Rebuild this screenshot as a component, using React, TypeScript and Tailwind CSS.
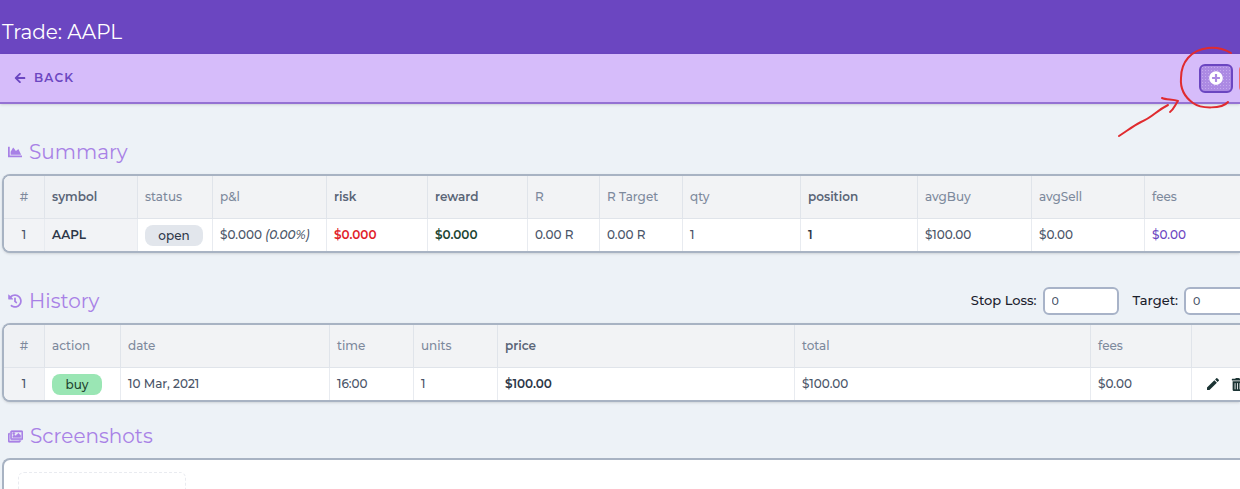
import type { ReactNode } from "react";
import { FaArrowLeft, FaChartArea, FaHistory, FaPlusCircle, FaRegImages, FaTrashAlt } from "react-icons/fa";
import { MdEdit } from "react-icons/md";

type Column = {
  name: string;
  width: string;
  value: ReactNode;
  head?: string;
  cell?: string;
};

const strong = "font-semibold text-[#5a6577]";
const numberHead = "font-medium text-center bg-[#eff1f4]";
const numberCell = "text-center bg-[#f2f3f6]";

const summaryColumns: Column[] = [
  { name: "#", width: "w-[41px]", value: "1", head: numberHead, cell: numberCell },
  {
    name: "symbol",
    width: "w-[93px]",
    value: "AAPL",
    head: "font-semibold text-[#5a6577] bg-[#eff1f4]",
    cell: "font-semibold text-[#2d3748] bg-[#f2f3f6]",
  },
  {
    name: "status",
    width: "w-[75px]",
    value: <span className="block w-[58px] rounded-lg bg-[#e2e6ec] text-center leading-[21px] text-[#2d3748]">open</span>,
  },
  { name: "p&l", width: "w-[114px]", value: <>$0.000 <i>(0.00%)</i></> },
  { name: "risk", width: "w-[101px]", value: "$0.000", head: strong, cell: "font-semibold text-[#e11d2a]" },
  { name: "reward", width: "w-[100px]", value: "$0.000", head: strong, cell: "font-semibold text-[#1c4532]" },
  { name: "R", width: "w-[72px]", value: "0.00 R" },
  { name: "R Target", width: "w-[83px]", value: "0.00 R" },
  { name: "qty", width: "w-[118px]", value: "1" },
  { name: "position", width: "w-[117px]", value: "1", head: strong, cell: "font-semibold text-[#2d3748]" },
  { name: "avgBuy", width: "w-[114px]", value: "$100.00" },
  { name: "avgSell", width: "w-[113px]", value: "$0.00" },
  { name: "fees", width: "w-auto", value: "$0.00", cell: "text-[#6b46c1]" },
];

const historyColumns: Column[] = [
  { name: "#", width: "w-[41px]", value: "1", head: numberHead, cell: numberCell },
  {
    name: "action",
    width: "w-[76px]",
    value: <span className="block w-[50px] rounded-lg bg-[#9ae6b4] text-center leading-[21px] text-[#22432f]">buy</span>,
  },
  { name: "date", width: "w-[209px]", value: "10 Mar, 2021" },
  { name: "time", width: "w-[84px]", value: "16:00" },
  { name: "units", width: "w-[84px]", value: "1" },
  { name: "price", width: "w-[297px]", value: "$100.00", head: strong, cell: "font-semibold text-[#2d3748]" },
  { name: "total", width: "w-[296px]", value: "$100.00" },
  { name: "fees", width: "w-[101px]", value: "$0.00" },
  {
    name: "",
    width: "w-auto",
    value: (
      <span className="flex w-max items-center gap-2.5 pl-1.5 text-[#1c3434]">
        <button type="button" aria-label="Edit"><MdEdit className="size-4" /></button>
        <button type="button" aria-label="Delete"><FaTrashAlt className="size-[13px]" /></button>
      </span>
    ),
  },
];

function DataTable({ label, columns }: { label: string; columns: Column[] }) {
  return (
    <div className="overflow-hidden rounded-l-lg border-2 border-r-0 border-[#a8b3c3] bg-white shadow-sm">
      <table aria-label={label} className="w-full table-fixed border-separate border-spacing-0 text-xs font-medium">
        <thead>
          <tr className="h-[43px] bg-[#f2f3f5] text-[#7d899c]">
            {columns.map((c) => (
              <th
                key={c.name}
                className={`${c.width} ${c.head ?? "font-medium"} border-r border-b border-[#e0e4ea] px-[7px] text-left last:border-r-0 first:text-center`}
              >
                {c.name}
              </th>
            ))}
          </tr>
        </thead>
        <tbody>
          <tr className="h-8 text-[#4a5568]">
            {columns.map((c) => (
              <td key={c.name} className={`${c.cell ?? ""} border-r border-[#e8ebf0] px-[7px] whitespace-nowrap last:border-r-0`}>
                {c.value}
              </td>
            ))}
          </tr>
        </tbody>
      </table>
    </div>
  );
}

function Heading({ icon, children }: { icon: ReactNode; children: ReactNode }) {
  return (
    <h2 className="flex h-8 items-center gap-[7px] pl-1.5 text-xl text-[#a881e6]">
      {icon}
      {children}
    </h2>
  );
}

function NumberField({ id, label }: { id: string; label: string }) {
  return (
    <div className="flex items-center gap-1.5">
      <label htmlFor={id} className="text-[13px] font-medium whitespace-nowrap text-[#1a202c]">{label}</label>
      <input
        id={id}
        type="text"
        inputMode="numeric"
        defaultValue="0"
        className="h-7 w-[76px] rounded-md border-2 border-[#a8b3c8] bg-white px-[7px] text-[11px] font-medium text-[#4a5568]"
      />
    </div>
  );
}

function Annotation() {
  return (
    <svg
      className="pointer-events-none absolute top-[40px] right-0 h-[100px] w-[126px]"
      viewBox="0 0 126 100"
      fill="none"
      stroke="#e02b2f"
      strokeWidth="2"
      strokeLinecap="round"
      strokeLinejoin="round"
      aria-hidden="true"
    >
      <path d="M117 13C110 9 103 7 94 8C77 10 67 22 67 38C66 50 72 58 79 63C87 69 108 69 114 62" />
      <path d="M5 96C13 91 19 86 27 82C39 77 42 71 54 65M48 58C52 60 59 59 64 61C61 65 60 69 56 72" />
    </svg>
  );
}

export default function App() {
  return (
    <div className="relative min-h-screen overflow-hidden bg-[#edf2f7] font-[Montserrat,Inter,sans-serif]">
      <header className="flex h-[54px] items-end bg-[#6b46c1] px-0.5 pb-2">
        <h1 className="text-xl text-white">Trade: AAPL</h1>
      </header>
      <nav className="flex h-[50px] items-center justify-between border-b-2 border-[#9472d3] bg-[#d6bcfa] pl-3.5 shadow-sm">
        <a href="#back" className="flex items-center gap-2 text-xs font-semibold tracking-widest text-[#6b46c1]">
          <FaArrowLeft className="size-3" />
          BACK
        </a>
        <div className="-mr-[33px] flex gap-1.5">
          <button
            type="button"
            aria-label="Add"
            className="flex h-[29px] w-[34px] items-center justify-center rounded-md border-2 border-[#6b46c1] bg-[#ac8ae3] bg-[radial-gradient(#c4a9ef_1px,transparent_1px)] bg-[length:3px_3px] text-white"
          >
            <FaPlusCircle className="size-3.5" />
          </button>
          <button type="button" aria-label="Remove" className="h-[29px] w-[34px] rounded-md border-2 border-[#f26b6b] bg-[#f5a3a3]" />
        </div>
      </nav>
      <main className="h-[385px] min-h-[calc(100vh-104px)] pt-8 pl-0.5">
        <section>
          <Heading icon={<FaChartArea className="size-3.5" />}>Summary</Heading>
          <div className="pt-1.5">
            <DataTable label="Summary" columns={summaryColumns} />
          </div>
        </section>
        <section className="pt-8">
          <div className="flex items-center justify-between">
            <Heading icon={<FaHistory className="size-3.5" />}>History</Heading>
            <div className="-mr-5 flex gap-3.5">
              <NumberField id="stop-loss" label="Stop Loss:" />
              <NumberField id="target" label="Target:" />
            </div>
          </div>
          <div className="pt-1.5">
            <DataTable label="History" columns={historyColumns} />
          </div>
        </section>
        <section className="pt-[18px]">
          <Heading icon={<FaRegImages className="size-[15px] stroke-current" strokeWidth={24} />}>Screenshots</Heading>
          <div className="mt-1.5 rounded-l-lg border-2 border-r-0 border-[#a8b3c3] bg-white p-3.5 pt-3">
            <div className="h-32 w-[168px] rounded-md border border-dashed border-[#e9ebf0]" />
          </div>
        </section>
      </main>
      <Annotation />
    </div>
  );
}
